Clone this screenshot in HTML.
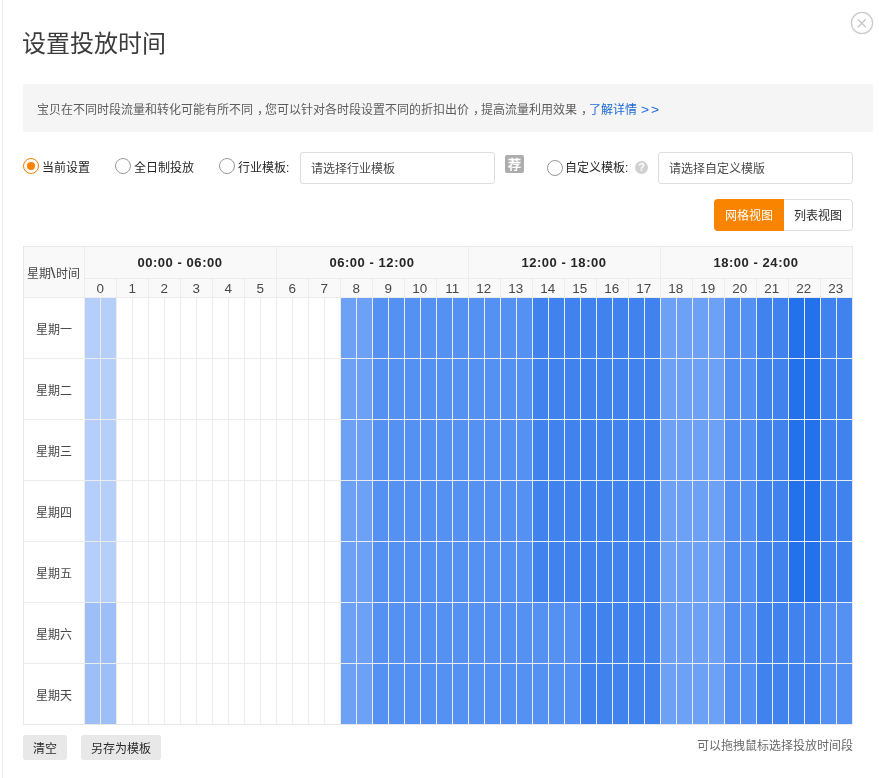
<!DOCTYPE html>
<html lang="zh-CN"><head><meta charset="utf-8">
<style>
*{margin:0;padding:0;box-sizing:border-box}
html,body{width:879px;height:778px;overflow:hidden;background:#fff}
body{position:relative;font-family:"Liberation Sans",sans-serif;color:#333;font-size:12px}
.a{position:absolute;white-space:nowrap}
.a,.lbl,.inp,.gh,.hn,.dl,.btn{will-change:transform}
.edge{position:absolute;left:2px;top:0;width:1px;height:778px;background:#ececec}
.title{left:22px;top:28px;font-size:24px;line-height:32px;color:#3c3c3c}
.close{left:850px;top:11px;width:24px;height:24px}
.tip{left:23px;top:84px;width:850px;height:48px;background:#f5f5f5;border-radius:2px}
.tiptx{left:37px;top:101.5px;line-height:16px;color:#5c5c5c}
.cm{display:inline-block;transform:translateX(4px)}
.tiptx a{color:#1a6ad8;text-decoration:none}
.gt{display:inline-block;letter-spacing:1.6px;transform:scaleX(1.15);transform-origin:0 0;margin-left:1px}
.radio{position:absolute;width:16px;height:16px;border:1px solid #999;border-radius:50%;background:#fff}
.radio.on{border-color:#f08300}
.radio.on:after{content:"";position:absolute;left:3px;top:3px;width:8px;height:8px;border-radius:50%;background:#ff8200}
.lbl{position:absolute;line-height:16px;top:160px;color:#262626}
.inp{position:absolute;top:152px;height:32px;width:195px;border:1px solid #ddd;border-radius:3px;padding-left:10px;padding-top:1px;line-height:30px;color:#4a4a4a}
.jian{left:505px;top:155px;width:19px;height:18px;background:#adadad;border-radius:2px;color:#fff;font-size:13px;line-height:19px;text-align:center;font-weight:bold}
.q{left:635px;top:161px;width:13px;height:13px;border-radius:50%;background:#d0d0d0;color:#fff;font-size:11px;line-height:13px;text-align:center;font-weight:bold}
.seg{left:714px;top:199px;width:139px;height:32px;border:1px solid #ddd;border-radius:4px}
.seg .s1{position:absolute;left:-1px;top:-1px;width:70px;height:32px;background:#f98400;color:#fff;line-height:34px;text-align:center;border-radius:4px 0 0 4px}
.seg .s2{position:absolute;left:69px;top:0;width:67px;height:30px;color:#2a2a2a;line-height:32px;text-align:center}
.tbl{left:23px;top:246px;width:830px;height:479px;border:1px solid #e8e8e8;background:#fff}
.thead{left:24px;top:247px;width:828px;height:50px;background:#f9f9f9}
b{position:absolute;background:#ececec;display:block}
i{position:absolute;width:15px;height:60px;display:block}
.gh{position:absolute;top:247px;letter-spacing:0.55px;width:192px;line-height:32px;text-align:center;font-weight:bold;font-size:13px;color:#262626}
.hn em{font-style:normal;display:inline-block;transform:scaleX(1.12)}
.hn{position:absolute;top:280px;width:32px;line-height:19px;text-align:center;color:#484848}
.dl{position:absolute;left:23px;width:61px;line-height:66px;text-align:center;color:#484848}
.corner{left:23px;top:247px;width:61px;line-height:51px;height:51px;text-align:center;color:#484848}
.btn{position:absolute;top:735px;height:25px;background:#e8e8e8;border-radius:3px;line-height:28px;padding:0 10px;color:#2a2a2a}
.hint{right:26px;top:738px;line-height:16px;color:#6a6a6a}
</style></head><body>
<div class="edge"></div>
<div class="a title">设置投放时间</div>
<div class="a close"><svg width="24" height="24" viewBox="0 0 24 24"><circle cx="12" cy="12" r="10.6" stroke="#cacaca" stroke-width="1.3" fill="none"/><path d="M7.8 8.3L15.8 16.2M15.8 8.3L7.8 16.2" stroke="#c4c4c4" stroke-width="1.2" fill="none"/></svg></div>
<div class="a tip"></div>
<div class="a tiptx">宝贝在不同时段流量和转化可能有所不同<span class="cm">，</span>您可以针对各时段设置不同的折扣出价<span class="cm">，</span>提高流量利用效果<span class="cm">，</span><a>了解详情 <span class="gt">&gt;&gt;</span></a></div>

<div class="radio on" style="left:23px;top:158px"></div><span class="lbl" style="left:42px">当前设置</span>
<div class="radio" style="left:115px;top:158px"></div><span class="lbl" style="left:134px">全日制投放</span>
<div class="radio" style="left:219px;top:158px"></div><span class="lbl" style="left:238px">行业模板:</span>
<div class="inp" style="left:300px">请选择行业模板</div>
<div class="a jian">荐</div>
<div class="radio" style="left:547px;top:160px"></div><span class="lbl" style="left:565px">自定义模板:</span>
<div class="a q">?</div>
<div class="inp" style="left:658px">请选择自定义模版</div>

<div class="a seg"><span class="s1">网格视图</span><span class="s2">列表视图</span></div>

<div class="a tbl"></div>
<div class="a thead"></div>
<b style="left:24px;top:278px;width:828px;height:1px;background:#ececec;left:84px;width:768px"></b>
<b style="left:24px;top:297px;width:828px;height:1px"></b>
<b style="left:84px;top:247px;width:1px;height:477px"></b>
<b style="left:100px;top:297px;width:1px;height:427px"></b><b style="left:116px;top:297px;width:1px;height:427px"></b><b style="left:132px;top:297px;width:1px;height:427px"></b><b style="left:148px;top:297px;width:1px;height:427px"></b><b style="left:164px;top:297px;width:1px;height:427px"></b><b style="left:180px;top:297px;width:1px;height:427px"></b><b style="left:196px;top:297px;width:1px;height:427px"></b><b style="left:212px;top:297px;width:1px;height:427px"></b><b style="left:228px;top:297px;width:1px;height:427px"></b><b style="left:244px;top:297px;width:1px;height:427px"></b><b style="left:260px;top:297px;width:1px;height:427px"></b><b style="left:276px;top:297px;width:1px;height:427px"></b><b style="left:292px;top:297px;width:1px;height:427px"></b><b style="left:308px;top:297px;width:1px;height:427px"></b><b style="left:324px;top:297px;width:1px;height:427px"></b><b style="left:340px;top:297px;width:1px;height:427px"></b><b style="left:356px;top:297px;width:1px;height:427px"></b><b style="left:372px;top:297px;width:1px;height:427px"></b><b style="left:388px;top:297px;width:1px;height:427px"></b><b style="left:404px;top:297px;width:1px;height:427px"></b><b style="left:420px;top:297px;width:1px;height:427px"></b><b style="left:436px;top:297px;width:1px;height:427px"></b><b style="left:452px;top:297px;width:1px;height:427px"></b><b style="left:468px;top:297px;width:1px;height:427px"></b><b style="left:484px;top:297px;width:1px;height:427px"></b><b style="left:500px;top:297px;width:1px;height:427px"></b><b style="left:516px;top:297px;width:1px;height:427px"></b><b style="left:532px;top:297px;width:1px;height:427px"></b><b style="left:548px;top:297px;width:1px;height:427px"></b><b style="left:564px;top:297px;width:1px;height:427px"></b><b style="left:580px;top:297px;width:1px;height:427px"></b><b style="left:596px;top:297px;width:1px;height:427px"></b><b style="left:612px;top:297px;width:1px;height:427px"></b><b style="left:628px;top:297px;width:1px;height:427px"></b><b style="left:644px;top:297px;width:1px;height:427px"></b><b style="left:660px;top:297px;width:1px;height:427px"></b><b style="left:676px;top:297px;width:1px;height:427px"></b><b style="left:692px;top:297px;width:1px;height:427px"></b><b style="left:708px;top:297px;width:1px;height:427px"></b><b style="left:724px;top:297px;width:1px;height:427px"></b><b style="left:740px;top:297px;width:1px;height:427px"></b><b style="left:756px;top:297px;width:1px;height:427px"></b><b style="left:772px;top:297px;width:1px;height:427px"></b><b style="left:788px;top:297px;width:1px;height:427px"></b><b style="left:804px;top:297px;width:1px;height:427px"></b><b style="left:820px;top:297px;width:1px;height:427px"></b><b style="left:836px;top:297px;width:1px;height:427px"></b><b style="left:23px;top:358px;width:829px;height:1px"></b><b style="left:23px;top:419px;width:829px;height:1px"></b><b style="left:23px;top:480px;width:829px;height:1px"></b><b style="left:23px;top:541px;width:829px;height:1px"></b><b style="left:23px;top:602px;width:829px;height:1px"></b><b style="left:23px;top:663px;width:829px;height:1px"></b><b style="left:116px;top:278px;width:1px;height:19px"></b><b style="left:148px;top:278px;width:1px;height:19px"></b><b style="left:180px;top:278px;width:1px;height:19px"></b><b style="left:212px;top:278px;width:1px;height:19px"></b><b style="left:244px;top:278px;width:1px;height:19px"></b><b style="left:276px;top:278px;width:1px;height:19px"></b><b style="left:308px;top:278px;width:1px;height:19px"></b><b style="left:340px;top:278px;width:1px;height:19px"></b><b style="left:372px;top:278px;width:1px;height:19px"></b><b style="left:404px;top:278px;width:1px;height:19px"></b><b style="left:436px;top:278px;width:1px;height:19px"></b><b style="left:468px;top:278px;width:1px;height:19px"></b><b style="left:500px;top:278px;width:1px;height:19px"></b><b style="left:532px;top:278px;width:1px;height:19px"></b><b style="left:564px;top:278px;width:1px;height:19px"></b><b style="left:596px;top:278px;width:1px;height:19px"></b><b style="left:628px;top:278px;width:1px;height:19px"></b><b style="left:660px;top:278px;width:1px;height:19px"></b><b style="left:692px;top:278px;width:1px;height:19px"></b><b style="left:724px;top:278px;width:1px;height:19px"></b><b style="left:756px;top:278px;width:1px;height:19px"></b><b style="left:788px;top:278px;width:1px;height:19px"></b><b style="left:820px;top:278px;width:1px;height:19px"></b><b style="left:276px;top:246px;width:1px;height:32px"></b><b style="left:468px;top:246px;width:1px;height:32px"></b><b style="left:660px;top:246px;width:1px;height:32px"></b>
<i style="left:85px;top:298px;background:#b5cffa"></i><i style="left:101px;top:298px;background:#b5cffa"></i><i style="left:341px;top:298px;background:#6ca1f5"></i><i style="left:357px;top:298px;background:#6ca1f5"></i><i style="left:373px;top:298px;background:#5591f2"></i><i style="left:389px;top:298px;background:#5591f2"></i><i style="left:405px;top:298px;background:#5591f2"></i><i style="left:421px;top:298px;background:#5591f2"></i><i style="left:437px;top:298px;background:#5591f2"></i><i style="left:453px;top:298px;background:#5591f2"></i><i style="left:469px;top:298px;background:#5591f2"></i><i style="left:485px;top:298px;background:#5591f2"></i><i style="left:501px;top:298px;background:#5591f2"></i><i style="left:517px;top:298px;background:#5591f2"></i><i style="left:533px;top:298px;background:#4082ee"></i><i style="left:549px;top:298px;background:#4082ee"></i><i style="left:565px;top:298px;background:#4082ee"></i><i style="left:581px;top:298px;background:#4082ee"></i><i style="left:597px;top:298px;background:#4082ee"></i><i style="left:613px;top:298px;background:#4082ee"></i><i style="left:629px;top:298px;background:#4082ee"></i><i style="left:645px;top:298px;background:#4082ee"></i><i style="left:661px;top:298px;background:#6ca1f5"></i><i style="left:677px;top:298px;background:#6ca1f5"></i><i style="left:693px;top:298px;background:#6ca1f5"></i><i style="left:709px;top:298px;background:#6ca1f5"></i><i style="left:725px;top:298px;background:#5591f2"></i><i style="left:741px;top:298px;background:#5591f2"></i><i style="left:757px;top:298px;background:#4082ee"></i><i style="left:773px;top:298px;background:#4082ee"></i><i style="left:789px;top:298px;background:#2471ec"></i><i style="left:805px;top:298px;background:#2471ec"></i><i style="left:821px;top:298px;background:#4082ee"></i><i style="left:837px;top:298px;background:#4082ee"></i><i style="left:85px;top:359px;background:#b5cffa"></i><i style="left:101px;top:359px;background:#b5cffa"></i><i style="left:341px;top:359px;background:#6ca1f5"></i><i style="left:357px;top:359px;background:#6ca1f5"></i><i style="left:373px;top:359px;background:#5591f2"></i><i style="left:389px;top:359px;background:#5591f2"></i><i style="left:405px;top:359px;background:#5591f2"></i><i style="left:421px;top:359px;background:#5591f2"></i><i style="left:437px;top:359px;background:#5591f2"></i><i style="left:453px;top:359px;background:#5591f2"></i><i style="left:469px;top:359px;background:#5591f2"></i><i style="left:485px;top:359px;background:#5591f2"></i><i style="left:501px;top:359px;background:#5591f2"></i><i style="left:517px;top:359px;background:#5591f2"></i><i style="left:533px;top:359px;background:#4082ee"></i><i style="left:549px;top:359px;background:#4082ee"></i><i style="left:565px;top:359px;background:#4082ee"></i><i style="left:581px;top:359px;background:#4082ee"></i><i style="left:597px;top:359px;background:#4082ee"></i><i style="left:613px;top:359px;background:#4082ee"></i><i style="left:629px;top:359px;background:#4082ee"></i><i style="left:645px;top:359px;background:#4082ee"></i><i style="left:661px;top:359px;background:#6ca1f5"></i><i style="left:677px;top:359px;background:#6ca1f5"></i><i style="left:693px;top:359px;background:#6ca1f5"></i><i style="left:709px;top:359px;background:#6ca1f5"></i><i style="left:725px;top:359px;background:#5591f2"></i><i style="left:741px;top:359px;background:#5591f2"></i><i style="left:757px;top:359px;background:#4082ee"></i><i style="left:773px;top:359px;background:#4082ee"></i><i style="left:789px;top:359px;background:#2471ec"></i><i style="left:805px;top:359px;background:#2471ec"></i><i style="left:821px;top:359px;background:#4082ee"></i><i style="left:837px;top:359px;background:#4082ee"></i><i style="left:85px;top:420px;background:#b5cffa"></i><i style="left:101px;top:420px;background:#b5cffa"></i><i style="left:341px;top:420px;background:#6ca1f5"></i><i style="left:357px;top:420px;background:#6ca1f5"></i><i style="left:373px;top:420px;background:#5591f2"></i><i style="left:389px;top:420px;background:#5591f2"></i><i style="left:405px;top:420px;background:#5591f2"></i><i style="left:421px;top:420px;background:#5591f2"></i><i style="left:437px;top:420px;background:#5591f2"></i><i style="left:453px;top:420px;background:#5591f2"></i><i style="left:469px;top:420px;background:#5591f2"></i><i style="left:485px;top:420px;background:#5591f2"></i><i style="left:501px;top:420px;background:#5591f2"></i><i style="left:517px;top:420px;background:#5591f2"></i><i style="left:533px;top:420px;background:#4082ee"></i><i style="left:549px;top:420px;background:#4082ee"></i><i style="left:565px;top:420px;background:#4082ee"></i><i style="left:581px;top:420px;background:#4082ee"></i><i style="left:597px;top:420px;background:#4082ee"></i><i style="left:613px;top:420px;background:#4082ee"></i><i style="left:629px;top:420px;background:#4082ee"></i><i style="left:645px;top:420px;background:#4082ee"></i><i style="left:661px;top:420px;background:#6ca1f5"></i><i style="left:677px;top:420px;background:#6ca1f5"></i><i style="left:693px;top:420px;background:#6ca1f5"></i><i style="left:709px;top:420px;background:#6ca1f5"></i><i style="left:725px;top:420px;background:#5591f2"></i><i style="left:741px;top:420px;background:#5591f2"></i><i style="left:757px;top:420px;background:#4082ee"></i><i style="left:773px;top:420px;background:#4082ee"></i><i style="left:789px;top:420px;background:#2471ec"></i><i style="left:805px;top:420px;background:#2471ec"></i><i style="left:821px;top:420px;background:#4082ee"></i><i style="left:837px;top:420px;background:#4082ee"></i><i style="left:85px;top:481px;background:#b5cffa"></i><i style="left:101px;top:481px;background:#b5cffa"></i><i style="left:341px;top:481px;background:#6ca1f5"></i><i style="left:357px;top:481px;background:#6ca1f5"></i><i style="left:373px;top:481px;background:#5591f2"></i><i style="left:389px;top:481px;background:#5591f2"></i><i style="left:405px;top:481px;background:#5591f2"></i><i style="left:421px;top:481px;background:#5591f2"></i><i style="left:437px;top:481px;background:#5591f2"></i><i style="left:453px;top:481px;background:#5591f2"></i><i style="left:469px;top:481px;background:#5591f2"></i><i style="left:485px;top:481px;background:#5591f2"></i><i style="left:501px;top:481px;background:#5591f2"></i><i style="left:517px;top:481px;background:#5591f2"></i><i style="left:533px;top:481px;background:#4082ee"></i><i style="left:549px;top:481px;background:#4082ee"></i><i style="left:565px;top:481px;background:#4082ee"></i><i style="left:581px;top:481px;background:#4082ee"></i><i style="left:597px;top:481px;background:#4082ee"></i><i style="left:613px;top:481px;background:#4082ee"></i><i style="left:629px;top:481px;background:#4082ee"></i><i style="left:645px;top:481px;background:#4082ee"></i><i style="left:661px;top:481px;background:#6ca1f5"></i><i style="left:677px;top:481px;background:#6ca1f5"></i><i style="left:693px;top:481px;background:#6ca1f5"></i><i style="left:709px;top:481px;background:#6ca1f5"></i><i style="left:725px;top:481px;background:#5591f2"></i><i style="left:741px;top:481px;background:#5591f2"></i><i style="left:757px;top:481px;background:#4082ee"></i><i style="left:773px;top:481px;background:#4082ee"></i><i style="left:789px;top:481px;background:#2471ec"></i><i style="left:805px;top:481px;background:#2471ec"></i><i style="left:821px;top:481px;background:#4082ee"></i><i style="left:837px;top:481px;background:#4082ee"></i><i style="left:85px;top:542px;background:#b5cffa"></i><i style="left:101px;top:542px;background:#b5cffa"></i><i style="left:341px;top:542px;background:#6ca1f5"></i><i style="left:357px;top:542px;background:#6ca1f5"></i><i style="left:373px;top:542px;background:#5591f2"></i><i style="left:389px;top:542px;background:#5591f2"></i><i style="left:405px;top:542px;background:#5591f2"></i><i style="left:421px;top:542px;background:#5591f2"></i><i style="left:437px;top:542px;background:#5591f2"></i><i style="left:453px;top:542px;background:#5591f2"></i><i style="left:469px;top:542px;background:#5591f2"></i><i style="left:485px;top:542px;background:#5591f2"></i><i style="left:501px;top:542px;background:#5591f2"></i><i style="left:517px;top:542px;background:#5591f2"></i><i style="left:533px;top:542px;background:#4082ee"></i><i style="left:549px;top:542px;background:#4082ee"></i><i style="left:565px;top:542px;background:#4082ee"></i><i style="left:581px;top:542px;background:#4082ee"></i><i style="left:597px;top:542px;background:#4082ee"></i><i style="left:613px;top:542px;background:#4082ee"></i><i style="left:629px;top:542px;background:#4082ee"></i><i style="left:645px;top:542px;background:#4082ee"></i><i style="left:661px;top:542px;background:#6ca1f5"></i><i style="left:677px;top:542px;background:#6ca1f5"></i><i style="left:693px;top:542px;background:#6ca1f5"></i><i style="left:709px;top:542px;background:#6ca1f5"></i><i style="left:725px;top:542px;background:#5591f2"></i><i style="left:741px;top:542px;background:#5591f2"></i><i style="left:757px;top:542px;background:#4082ee"></i><i style="left:773px;top:542px;background:#4082ee"></i><i style="left:789px;top:542px;background:#2471ec"></i><i style="left:805px;top:542px;background:#2471ec"></i><i style="left:821px;top:542px;background:#4082ee"></i><i style="left:837px;top:542px;background:#4082ee"></i><i style="left:85px;top:603px;background:#9ebef8"></i><i style="left:101px;top:603px;background:#9ebef8"></i><i style="left:341px;top:603px;background:#6ca1f5"></i><i style="left:357px;top:603px;background:#6ca1f5"></i><i style="left:373px;top:603px;background:#5591f2"></i><i style="left:389px;top:603px;background:#5591f2"></i><i style="left:405px;top:603px;background:#5591f2"></i><i style="left:421px;top:603px;background:#5591f2"></i><i style="left:437px;top:603px;background:#5591f2"></i><i style="left:453px;top:603px;background:#5591f2"></i><i style="left:469px;top:603px;background:#5591f2"></i><i style="left:485px;top:603px;background:#5591f2"></i><i style="left:501px;top:603px;background:#5591f2"></i><i style="left:517px;top:603px;background:#5591f2"></i><i style="left:533px;top:603px;background:#5591f2"></i><i style="left:549px;top:603px;background:#5591f2"></i><i style="left:565px;top:603px;background:#5591f2"></i><i style="left:581px;top:603px;background:#4082ee"></i><i style="left:597px;top:603px;background:#4082ee"></i><i style="left:613px;top:603px;background:#4082ee"></i><i style="left:629px;top:603px;background:#4082ee"></i><i style="left:645px;top:603px;background:#4082ee"></i><i style="left:661px;top:603px;background:#6ca1f5"></i><i style="left:677px;top:603px;background:#6ca1f5"></i><i style="left:693px;top:603px;background:#6ca1f5"></i><i style="left:709px;top:603px;background:#6ca1f5"></i><i style="left:725px;top:603px;background:#5591f2"></i><i style="left:741px;top:603px;background:#5591f2"></i><i style="left:757px;top:603px;background:#4082ee"></i><i style="left:773px;top:603px;background:#4082ee"></i><i style="left:789px;top:603px;background:#4082ee"></i><i style="left:805px;top:603px;background:#4082ee"></i><i style="left:821px;top:603px;background:#5591f2"></i><i style="left:837px;top:603px;background:#5591f2"></i><i style="left:85px;top:664px;background:#9ebef8"></i><i style="left:101px;top:664px;background:#9ebef8"></i><i style="left:341px;top:664px;background:#6ca1f5"></i><i style="left:357px;top:664px;background:#6ca1f5"></i><i style="left:373px;top:664px;background:#5591f2"></i><i style="left:389px;top:664px;background:#5591f2"></i><i style="left:405px;top:664px;background:#5591f2"></i><i style="left:421px;top:664px;background:#5591f2"></i><i style="left:437px;top:664px;background:#5591f2"></i><i style="left:453px;top:664px;background:#5591f2"></i><i style="left:469px;top:664px;background:#5591f2"></i><i style="left:485px;top:664px;background:#5591f2"></i><i style="left:501px;top:664px;background:#5591f2"></i><i style="left:517px;top:664px;background:#5591f2"></i><i style="left:533px;top:664px;background:#5591f2"></i><i style="left:549px;top:664px;background:#5591f2"></i><i style="left:565px;top:664px;background:#5591f2"></i><i style="left:581px;top:664px;background:#4082ee"></i><i style="left:597px;top:664px;background:#4082ee"></i><i style="left:613px;top:664px;background:#4082ee"></i><i style="left:629px;top:664px;background:#4082ee"></i><i style="left:645px;top:664px;background:#4082ee"></i><i style="left:661px;top:664px;background:#6ca1f5"></i><i style="left:677px;top:664px;background:#6ca1f5"></i><i style="left:693px;top:664px;background:#6ca1f5"></i><i style="left:709px;top:664px;background:#6ca1f5"></i><i style="left:725px;top:664px;background:#5591f2"></i><i style="left:741px;top:664px;background:#5591f2"></i><i style="left:757px;top:664px;background:#4082ee"></i><i style="left:773px;top:664px;background:#4082ee"></i><i style="left:789px;top:664px;background:#4082ee"></i><i style="left:805px;top:664px;background:#4082ee"></i><i style="left:821px;top:664px;background:#5591f2"></i><i style="left:837px;top:664px;background:#5591f2"></i>
<div class="a corner">星期<span style="font-size:15px;display:inline-block;transform:scaleX(1.2);margin:0 0.5px 0 0">\</span>时间</div>
<span class="gh" style="left:84px">00:00 - 06:00</span><span class="gh" style="left:276px">06:00 - 12:00</span><span class="gh" style="left:468px">12:00 - 18:00</span><span class="gh" style="left:660px">18:00 - 24:00</span>
<span class="hn" style="left:84px"><em>0</em></span><span class="hn" style="left:116px"><em>1</em></span><span class="hn" style="left:148px"><em>2</em></span><span class="hn" style="left:180px"><em>3</em></span><span class="hn" style="left:212px"><em>4</em></span><span class="hn" style="left:244px"><em>5</em></span><span class="hn" style="left:276px"><em>6</em></span><span class="hn" style="left:308px"><em>7</em></span><span class="hn" style="left:340px"><em>8</em></span><span class="hn" style="left:372px"><em>9</em></span><span class="hn" style="left:404px"><em>10</em></span><span class="hn" style="left:436px"><em>11</em></span><span class="hn" style="left:468px"><em>12</em></span><span class="hn" style="left:500px"><em>13</em></span><span class="hn" style="left:532px"><em>14</em></span><span class="hn" style="left:564px"><em>15</em></span><span class="hn" style="left:596px"><em>16</em></span><span class="hn" style="left:628px"><em>17</em></span><span class="hn" style="left:660px"><em>18</em></span><span class="hn" style="left:692px"><em>19</em></span><span class="hn" style="left:724px"><em>20</em></span><span class="hn" style="left:756px"><em>21</em></span><span class="hn" style="left:788px"><em>22</em></span><span class="hn" style="left:820px"><em>23</em></span>
<span class="dl" style="top:297px">星期一</span><span class="dl" style="top:358px">星期二</span><span class="dl" style="top:419px">星期三</span><span class="dl" style="top:480px">星期四</span><span class="dl" style="top:541px">星期五</span><span class="dl" style="top:602px">星期六</span><span class="dl" style="top:663px">星期天</span>
<span class="btn" style="left:23px">清空</span>
<span class="btn" style="left:81px">另存为模板</span>
<div class="a hint">可以拖拽鼠标选择投放时间段</div>
</body></html>
